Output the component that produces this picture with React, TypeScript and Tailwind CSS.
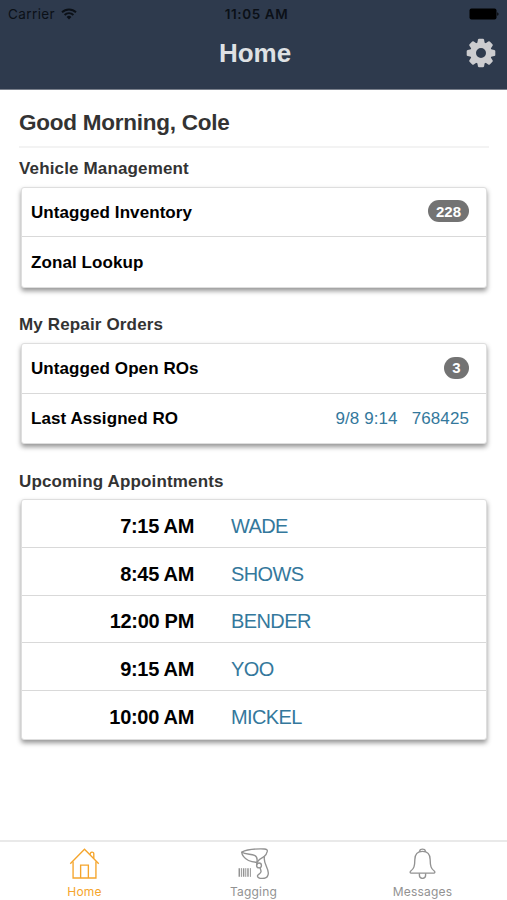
import type { ReactNode } from "react"

const repairOrder = { assigned: "9/8 9:14", number: "768425" }

const appointments = [
  { time: "7:15 AM", name: "WADE" },
  { time: "8:45 AM", name: "SHOWS" },
  { time: "12:00 PM", name: "BENDER" },
  { time: "9:15 AM", name: "YOO" },
  { time: "10:00 AM", name: "MICKEL" },
]

const toothAngles = [0, 45, 90, 135, 180, 225, 270, 315]

function WifiIcon() {
  return (
    <svg width="16" height="12" viewBox="0 0 16 12" fill="none" stroke="#0b1017" strokeWidth="1.9">
      <path d="M1 4.3a10 10 0 0 1 14 0" />
      <path d="M3.6 7a6.2 6.2 0 0 1 8.8 0" />
      <path d="M8 11.4 5.6 9a3.4 3.4 0 0 1 4.8 0Z" fill="#0b1017" stroke="none" />
    </svg>
  )
}

function BatteryIcon() {
  return (
    <svg width="30" height="12" viewBox="0 0 30 12" fill="#000">
      <rect x="0.5" y="0.5" width="27" height="11" rx="2" />
      <path d="M28.3 4.2c1.6.4 1.6 3.2 0 3.6Z" />
    </svg>
  )
}

function GearIcon() {
  return (
    <svg width="30" height="30" viewBox="-15 -15 30 30" fill="#cccccf">
      {toothAngles.map((angle) => (
        <path
          key={angle}
          transform={`rotate(${angle})`}
          d="M-3.9-9 -3.1-13.3Q-2.9-14.3 -1.9-14.3H1.9Q2.9-14.3 3.1-13.3L3.9-9Z"
        />
      ))}
      <circle r="7.9" fill="none" stroke="#cccccf" strokeWidth="5.8" />
    </svg>
  )
}

function HomeIcon() {
  return (
    <svg width="31" height="31" viewBox="0 0 32 32" fill="none" stroke="currentColor" strokeWidth="1.4">
      <path d="M1.3 16.3 16 1.3l14.7 15" />
      <path d="M4.2 14v17h23.6V14" />
      <path d="M12 31V17.7h8V31" />
      <path d="M21.8 6.9C21.8 3.6 25.6 3.6 25.6 6v4.9" />
    </svg>
  )
}

function ScannerIcon() {
  return (
    <svg width="31" height="31" viewBox="0 0 32 32" fill="none" stroke="currentColor" strokeWidth="1.4">
      <path d="M3.8 4.2C9 1.6 17 .7 27 1c2.9.1 3.5.9 3.2 2.6-.5 2.5-2 4.5-3.4 5.2-3 1.500-5.600 3.600-7.300 6C14.500 14.500 8.500 12.500 5.600 8.600 4.400 7 4 5.700 3.800 4.200Z" />
      <path d="M4 4.400C7.500 6.600 13.500 6.200 17 7.600c2.600 1 3.100 4 2.500 7.200" />
      <path d="M27.400 8.600c-2 6.200 4 11.400 3.900 17.400-.1 4-2.500 5.500-6.300 5.500-3.100 0-4.900-1-4.900-2.800 0-1.800 3.600-1.900 3.700-4.400 0-1.300-.5-2.400-1-3.700" />
      <circle cx="21.7" cy="18" r="2.5" />
      <path d="M19.5 14.8v3" />
      <path d="M1.3 20.8v9M5.8 20.8v9M10.3 20.8v9" strokeWidth="1.5" />
      <path d="M3.5 20.8v9M8 20.8v9M12.8 20.8v9" strokeWidth="1" />
    </svg>
  )
}

function BellIcon() {
  return (
    <svg width="31" height="31" viewBox="0 0 32 32" fill="none" stroke="currentColor" strokeWidth="1.4">
      <path d="M13.2 4V2.8C13.500.6 18.500.6 18.800 2.800V4" />
      <path d="M16 3.500c-5.300 0-7.800 3.500-7.900 8.400-.1 6.800-.9 9.500-4.200 11.800-1 .8-.9 2.300.5 2.300h23.200c1.400 0 1.500-1.500.5-2.300-3.300-2.300-4.100-5-4.200-11.800-.1-4.900-2.600-8.400-7.900-8.400Z" />
      <path d="M12.800 26v2.200c0 4.200 6.400 4.200 6.400 0V26" />
    </svg>
  )
}

function Badge({ children }: { children: ReactNode }) {
  return (
    <span className="-mt-0.5 flex h-[22px] min-w-[25px] items-center justify-center rounded-full bg-[#737373] px-2 text-[15px] font-bold leading-none text-white">
      {children}
    </span>
  )
}

function Section({ title, children }: { title: string; children: ReactNode }) {
  return (
    <section className="mb-[25.5px]">
      <h3 className="mb-[5.5px] h-6 text-[17px] font-bold leading-6 tracking-[0.15px] text-[#333]">{title}</h3>
      <div className="mx-0.5 divide-y divide-[#d9d9d9] rounded-[3px] border border-[#dedede] bg-white shadow-[0_3px_5px_rgba(0,0,0,0.42)]">
        {children}
      </div>
    </section>
  )
}

function Row({ label, children }: { label: string; children?: ReactNode }) {
  return (
    <div className="flex h-[49.7px] items-center justify-between pl-[9px] pr-[17px] pt-px">
      <span className="text-[17px] font-bold tracking-[0.08px] text-black">{label}</span>
      {children}
    </div>
  )
}

function Tab({ label, active = false, children }: { label: string; active?: boolean; children: ReactNode }) {
  return (
    <a
      href="#"
      className={`flex w-[169px] flex-col items-center pt-1.5 ${active ? "text-[#f5a52c]" : "text-[#929292]"}`}
    >
      {children}
      <span className="mt-[5px] font-[Inter,sans-serif] text-[12px] leading-4 tracking-[0.2px]">{label}</span>
    </a>
  )
}

export default function App() {
  return (
    <div className="flex h-[900px] w-[507px] flex-col overflow-hidden bg-white font-['Liberation_Sans',Arial,sans-serif]">
      <header className="h-[90px] shrink-0 border-b border-[#797f8b] bg-[#2e3a4d]">
        <div className="grid h-7 grid-cols-3 items-center px-2 font-[Inter,sans-serif] text-[13.5px] text-[#0b1017]">
          <div className="flex items-center gap-1.5">
            <span className="tracking-[0.4px]">Carrier</span>
            <WifiIcon />
          </div>
          <span className="pl-1.5 text-center font-semibold tracking-[0.6px]">11:05 AM</span>
          <div className="flex justify-end">
            <BatteryIcon />
          </div>
        </div>
        <div className="grid h-[50px] grid-cols-[1fr_auto_1fr] items-center px-[11px]">
          <span />
          <h1 className="pl-[3px] text-[26px] font-bold text-[#dfe1e4]">Home</h1>
          <button className="justify-self-end" aria-label="Settings">
            <GearIcon />
          </button>
        </div>
      </header>

      <main className="flex-1 pl-[19px] pr-[18px] pt-[17px]">
        <h2 className="mb-[9px] h-[41px] border-b-2 border-[#f3f3f3] text-[22.5px] font-bold leading-8 tracking-[-0.25px] text-[#333]">
          Good Morning, Cole
        </h2>

        <Section title="Vehicle Management">
          <Row label="Untagged Inventory">
            <Badge>228</Badge>
          </Row>
          <Row label="Zonal Lookup" />
        </Section>

        <Section title="My Repair Orders">
          <Row label="Untagged Open ROs">
            <Badge>3</Badge>
          </Row>
          <Row label="Last Assigned RO">
            <span className="flex gap-[14px] text-[17px] tracking-[0.1px] text-[#34789c]">
              <span>{repairOrder.assigned}</span>
              <span>{repairOrder.number}</span>
            </span>
          </Row>
        </Section>

        <Section title="Upcoming Appointments">
          {appointments.map((appointment) => (
            <div key={appointment.name} className="flex h-[47.7px] items-center gap-[37px] pt-[5px] text-[20px]">
              <span className="w-[172px] text-right font-bold tracking-[-0.3px] text-black">{appointment.time}</span>
              <span className="tracking-[-0.6px] text-[#34789c]">{appointment.name}</span>
            </div>
          ))}
        </Section>
      </main>

      <nav className="flex h-[60px] shrink-0 border-t-2 border-[#e9e9e9] bg-white">
        <Tab label="Home" active>
          <HomeIcon />
        </Tab>
        <Tab label="Tagging">
          <ScannerIcon />
        </Tab>
        <Tab label="Messages">
          <BellIcon />
        </Tab>
      </nav>
    </div>
  )
}
